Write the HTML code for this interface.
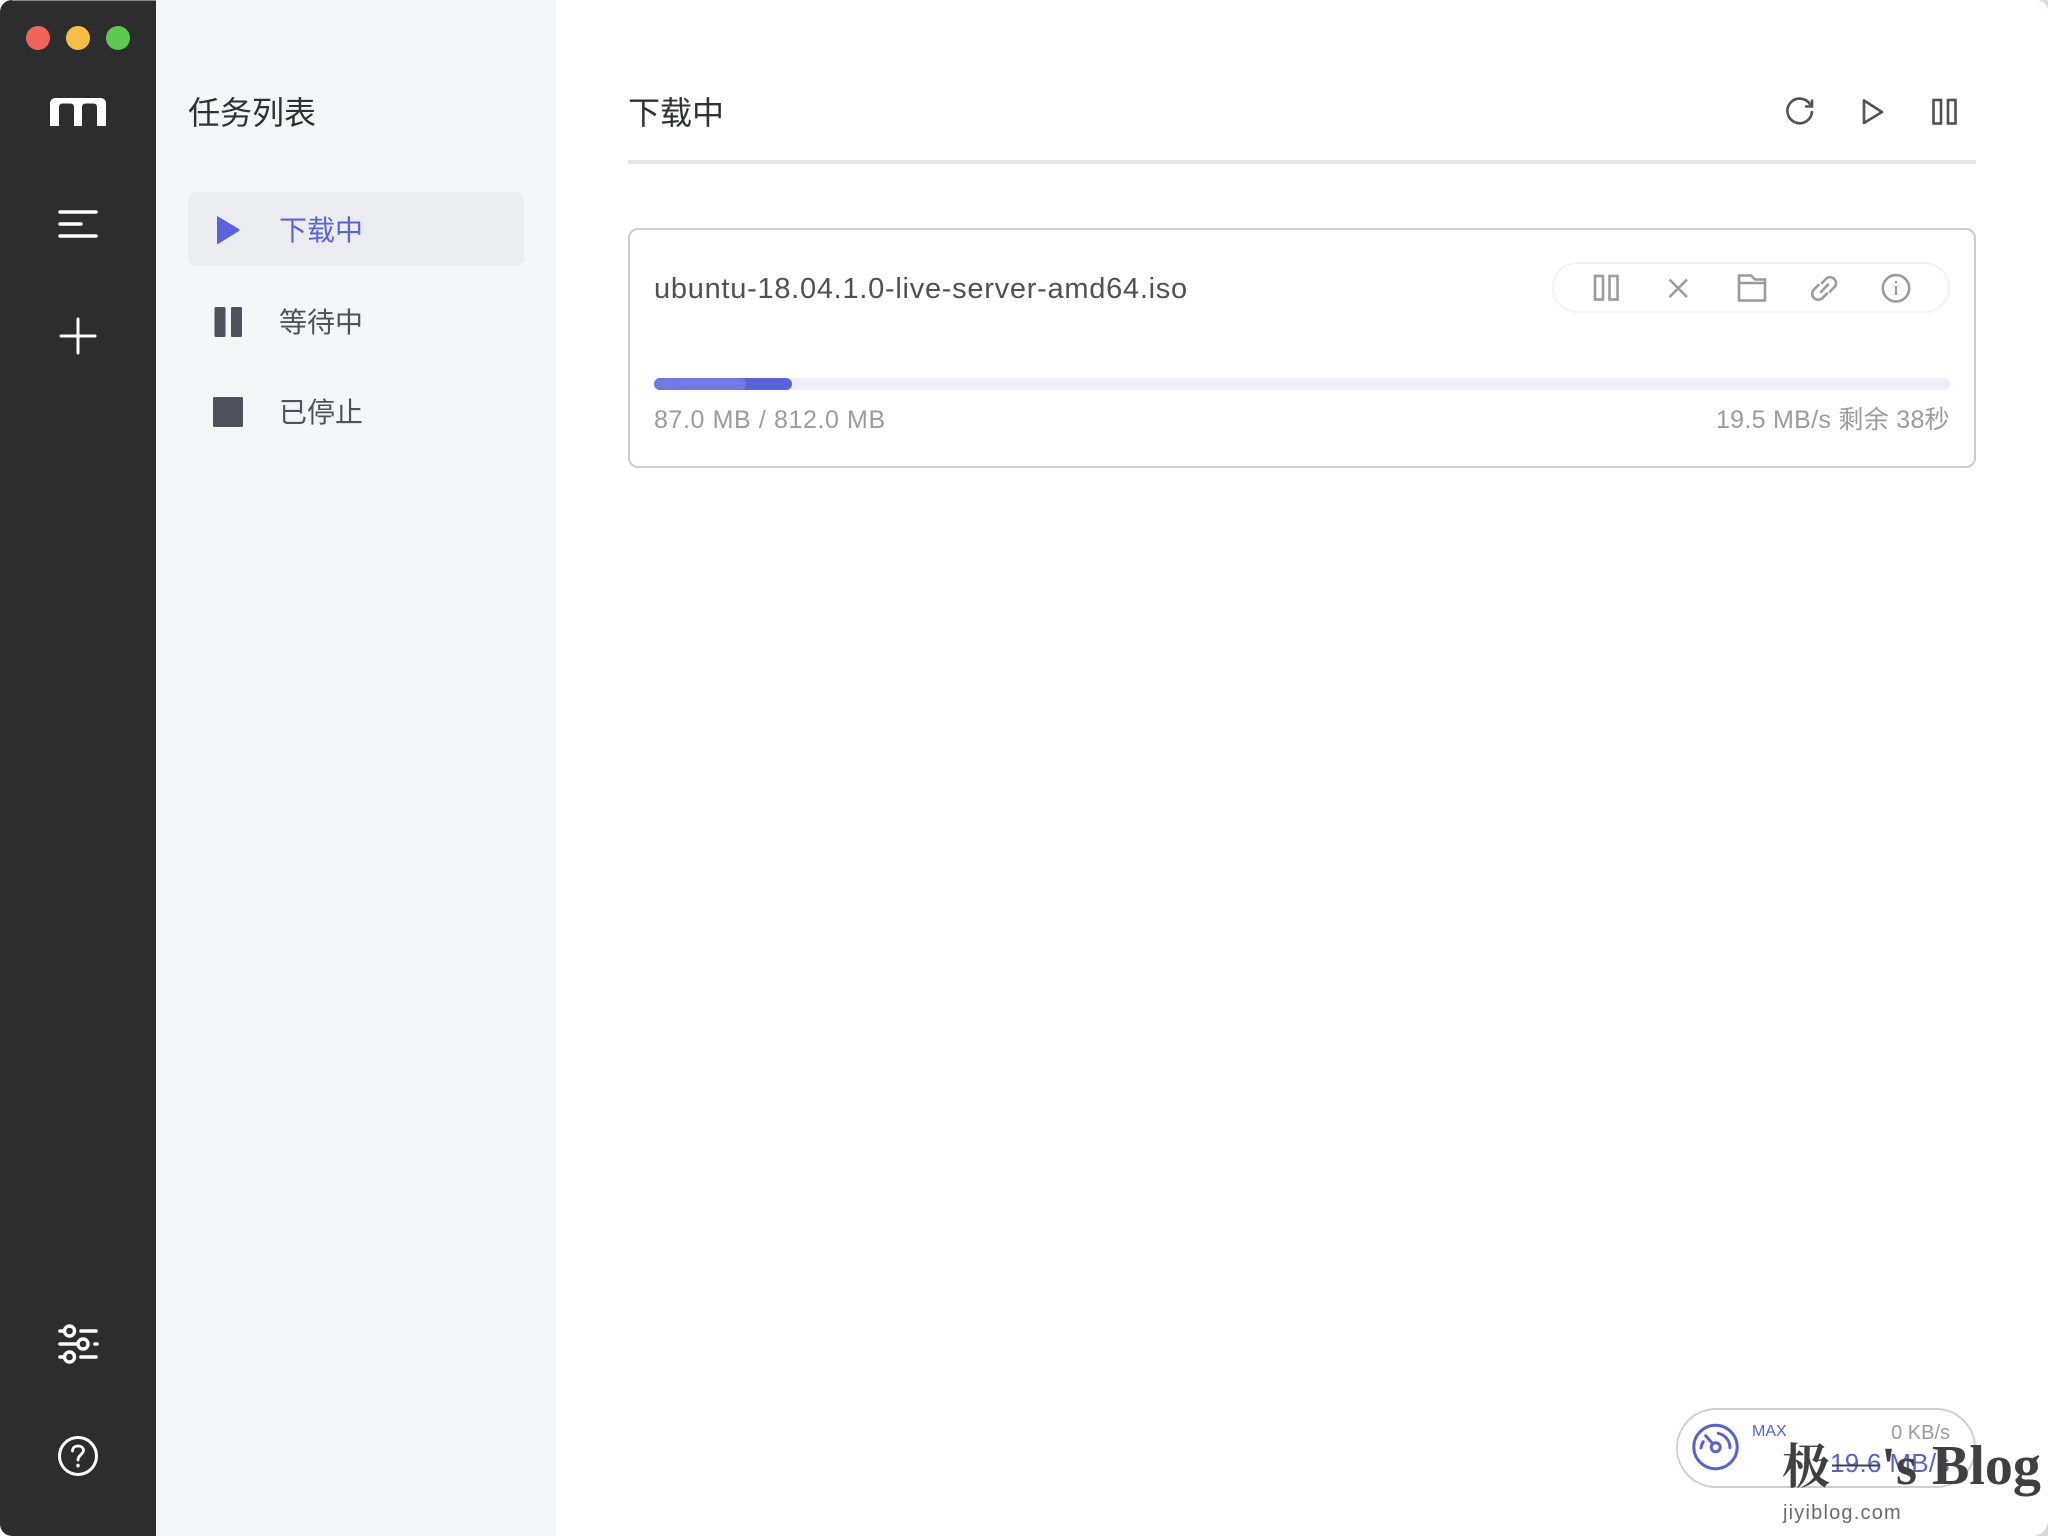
<!DOCTYPE html>
<html lang="zh">
<head>
<meta charset="utf-8">
<title>Motrix</title>
<style>
html,body{margin:0;padding:0;width:2048px;height:1536px;overflow:hidden;background:#fff}
body{position:relative;font-family:"Liberation Sans","Noto Sans CJK SC",sans-serif}
.a{position:absolute;white-space:nowrap}
.cj{font-family:"Noto Sans CJK SC","Liberation Sans",sans-serif}
svg{position:absolute;left:0;top:0}
</style>
</head>
<body>
<div class="a" style="left:0;top:0;width:156px;height:1536px;background:#2d2d2d;border-radius:12px 0 0 12px"></div>
<div class="a" style="left:156px;top:0;width:400px;height:1536px;background:#f4f5f7"></div>
<div class="a" style="left:12px;top:0;width:144px;height:1px;background:#8a8a8a"></div>

<div class="a cj" style="left:188px;top:89px;font-size:32px;line-height:44px;color:#303133">任务列表</div>
<div class="a" style="left:188px;top:192px;width:336px;height:74px;background:#ebecf0;border-radius:8px"></div>
<div class="a cj" style="left:279px;top:209px;font-size:28px;line-height:40px;color:#5b62d8">下载中</div>
<div class="a cj" style="left:279px;top:301px;font-size:28px;line-height:40px;color:#505159">等待中</div>
<div class="a cj" style="left:279px;top:391px;font-size:28px;line-height:40px;color:#505159">已停止</div>

<div class="a cj" style="left:628px;top:89px;font-size:32px;line-height:44px;color:#303133">下载中</div>
<div class="a" style="left:628px;top:160px;width:1348px;height:4px;background:#e6e6e6"></div>

<div class="a" style="left:628px;top:228px;width:1344px;height:236px;border:2px solid #cbcbcb;border-radius:10px"></div>
<div class="a" style="left:654px;top:271px;font-size:29px;line-height:36px;color:#505053;letter-spacing:.73px">ubuntu-18.04.1.0-live-server-amd64.iso</div>
<div class="a" style="left:1552px;top:262px;width:394px;height:47px;border:2px solid #f3f3f3;border-radius:26px"></div>

<div class="a" style="left:654px;top:378px;width:1296px;height:12px;background:#ebeef5;border-radius:6px"></div>
<div class="a" style="left:654px;top:378px;width:138px;height:12px;background:#5a62dc;border-radius:6px"></div>
<div class="a" style="left:654px;top:378px;width:92px;height:12px;background:#7478e2;border-radius:6px"></div>

<div class="a" style="left:654px;top:404px;font-size:25px;line-height:32px;color:#9b9b9b;letter-spacing:.6px">87.0 MB / 812.0 MB</div>
<div class="a" style="right:98px;top:404px;font-size:25px;line-height:32px;color:#9b9b9b;letter-spacing:.3px">19.5 MB/s 剩余 38秒</div>

<div class="a" style="left:1676px;top:1408px;width:296px;height:76px;border:2px solid #cfcfcf;border-radius:40px"></div>
<div class="a" style="left:1752px;top:1422px;font-size:16px;line-height:20px;color:#5b62c8">MAX</div>
<div class="a" style="right:98px;top:1420px;font-size:20px;line-height:26px;color:#9b9b9b">0 KB/s</div>
<div class="a" style="left:1830px;top:1448px;font-size:26px;line-height:30px;color:#5b62c8;letter-spacing:.3px">19.6 MB/s</div>

<svg width="2048" height="1536" viewBox="0 0 2048 1536" fill="none">
  <circle cx="38" cy="38" r="12" fill="#f0645c"/>
  <circle cx="78" cy="38" r="12" fill="#f8bc47"/>
  <circle cx="118" cy="38" r="12" fill="#5fc853"/>

  <path d="M50 126V104Q50 98 56 98H100Q106 98 106 104V126H97V107Q97 103.500 93 103.500H86Q82 103.500 82 107V126H74V107Q74 103.500 70 103.500H63Q59 103.500 59 107V126Z" fill="#fff"/>

  <g stroke="#fff" stroke-width="3.4" stroke-linecap="round">
    <path d="M60 212H96M60 224H81M60 236H96"/>
    <path d="M78 319V353M61 336H95" stroke-width="3"/>
    <path d="M60 1331H63M81 1331H96M60 1344H76M95 1344H97M60 1357H63M81 1357H96" stroke-width="3.600"/>
    <circle cx="69.500" cy="1331" r="5"/>
    <circle cx="83" cy="1344" r="5"/>
    <circle cx="69.500" cy="1357" r="5"/>
    <circle cx="78" cy="1456" r="18.500" stroke-width="3"/>
    <path d="M72.500 1451C72.500 1447.500 75 1446 78 1446C81.500 1446 83.500 1448 83.500 1450.500C83.500 1454 78 1455 78 1460" stroke-width="2.800"/>
    <path d="M78 1465.500V1465.700" stroke-width="3.400"/>
  </g>

  <path d="M218 216.500L239 229Q240 230 239 231L218 244Q217 245 217 243V217Q217 215.500 218 216.500Z" fill="#5b62dc"/>
  <rect x="214.500" y="307" width="11" height="30" rx="1.500" fill="#50515c"/>
  <rect x="231" y="307" width="11" height="30" rx="1.500" fill="#50515c"/>
  <rect x="213" y="397" width="30" height="30" rx="1.500" fill="#50515c"/>

  <g stroke="#505159" stroke-width="2.600">
    <path d="M1810.500 105A12.300 12.300 0 1 0 1812 111"/>
    <path d="M1812 99.500V106.500H1805"/>
    <path d="M1864 100.500V123L1882 112Z" stroke-linejoin="round"/>
    <rect x="1933.500" y="100" width="7.500" height="23.500"/>
    <rect x="1948" y="100" width="7.500" height="23.500"/>
  </g>

  <g stroke="#9b9b9b" stroke-width="2.600">
    <rect x="1595" y="276" width="8" height="23.500"/>
    <rect x="1609.500" y="276" width="8" height="23.500"/>
    <path d="M1669.500 279.500L1687 297M1687 279.500L1669.500 297"/>
    <path d="M1739 300.500V275.500H1751L1755 279.500H1765V300.500ZM1739 283H1765"/>
    <circle cx="1896" cy="288.300" r="13.200"/>
    <path d="M1896 286V295" stroke-width="2.200"/>
    <path d="M1896 281V283" stroke-width="2.200"/>
    <path d="M1822 283L1827 278A6 6 0 0 1 1835 286.500L1830 291.500M1827 293.500L1822.500 298A6 6 0 0 1 1814 289.500L1818.500 285M1821 292L1828 284.500" stroke-linecap="round"/>
  </g>

  <g stroke="#5b62c8" stroke-width="3">
    <circle cx="1715.500" cy="1447" r="21.700"/>
    <circle cx="1715.700" cy="1447.300" r="4.500"/>
    <path d="M1713 1444L1705.700 1435.700" stroke-linecap="round"/>
    <path d="M1701 1448A15 15 0 0 1 1703.300 1441.700M1718.300 1433.300A15 15 0 0 1 1730 1447.700" stroke-linecap="round"/>
  </g>

  <text x="1782" y="1483" font-family="'Noto Serif CJK SC','Liberation Serif',serif" font-size="48" font-weight="700" fill="#404040">极</text>
  <text x="1881" y="1484" font-family="'Liberation Serif',serif" font-size="54" font-weight="700" fill="#404040">'s</text>
  <text x="1932" y="1484" font-family="'Liberation Serif',serif" font-size="56" font-weight="700" fill="#404040">Blog</text>
  <path d="M1832 1465.500H1880" stroke="#404040" stroke-width="2"/>
  <text x="1783" y="1519" font-family="'Liberation Sans',sans-serif" font-size="20" fill="#6a6a6a" letter-spacing="1.200">jiyiblog.com</text>

  <path d="M2048 1522Q2046 1534 2034 1536H2048Z" fill="#d8d8d8"/>
  <path d="M2038 0Q2046 2 2048 10V0Z" fill="#dcdcdc"/>
</svg>
</body>
</html>
